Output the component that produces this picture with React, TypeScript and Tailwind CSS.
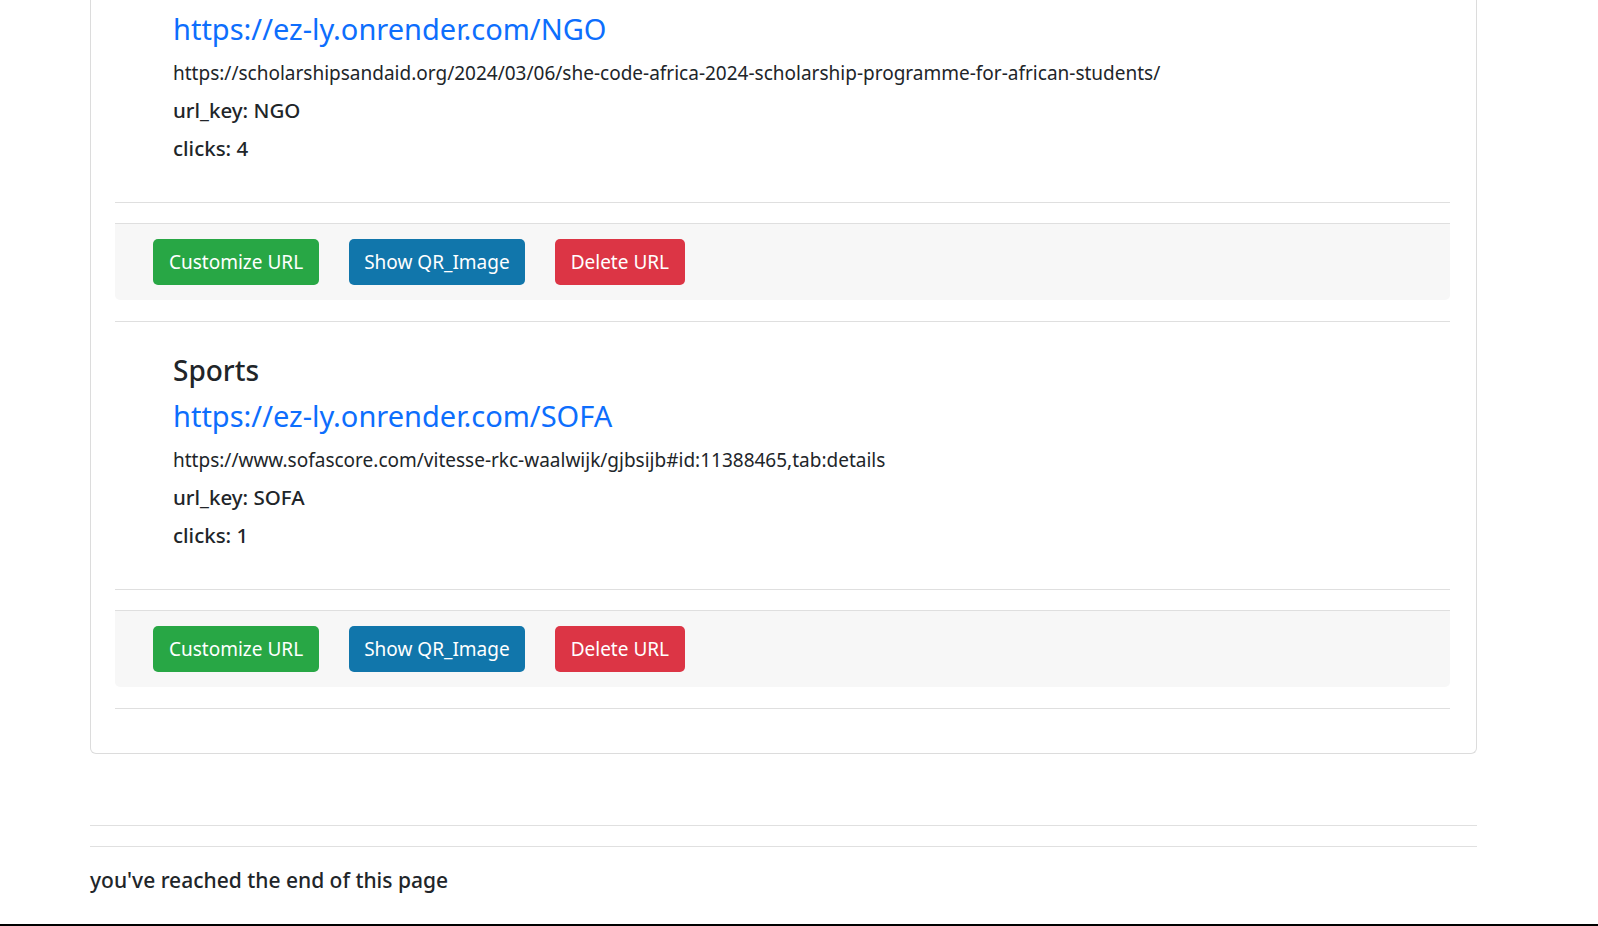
import React from "react";

const font = { fontFamily: '"Noto Sans", "Open Sans", sans-serif' };

type Item = { title?: string; key: string; url: string; clicks: number };

const items: Item[] = [
  {
    key: "NGO",
    url: "https://scholarshipsandaid.org/2024/03/06/she-code-africa-2024-scholarship-programme-for-african-students/",
    clicks: 4,
  },
  {
    title: "Sports",
    key: "SOFA",
    url: "https://www.sofascore.com/vitesse-rkc-waalwijk/gjbsijb#id:11388465,tab:details",
    clicks: 1,
  },
];

function Buttons() {
  return (
    <div className="mt-[20px] border-t border-[#dfdfdf] bg-[#f7f7f7] rounded-b-[5px] pt-[15px] pb-[15px] pl-[38px] flex gap-[30px]">
      <button className="h-[46px] px-[16px] rounded-[5px] bg-[#28a745] text-white text-[19px] leading-none">
        Customize URL
      </button>
      <button className="h-[46px] px-[15px] rounded-[5px] bg-[#1176ab] text-white text-[19px] leading-none">
        Show QR_Image
      </button>
      <button className="h-[46px] px-[16px] rounded-[5px] bg-[#dc3545] text-white text-[19px] leading-none">
        Delete URL
      </button>
    </div>
  );
}

function Entry({ item, first }: { item: Item; first: boolean }) {
  return (
    <div>
      <div className={first ? "pt-[6px] pl-[58px]" : "pt-[25px] pl-[58px]"}>
        {item.title && (
          <div className="h-[46px] flex items-center text-[28px] font-medium text-[#212529]">{item.title}</div>
        )}
        <div className="h-[46px] flex items-center">
          <a className="text-[29px] text-[#0d6efd] font-normal" href="#">
            https://ez-ly.onrender.com/{item.key}
          </a>
        </div>
        <div className="h-[42px] flex items-center text-[19px] text-[#212529]">{item.url}</div>
        <div className="h-[32px] flex items-center text-[20.5px] font-medium text-[#212529]">url_key: {item.key}</div>
        <div className="h-[44px] flex items-center text-[20.5px] font-medium text-[#212529]">clicks: {item.clicks}</div>
      </div>
      <div className="mt-[32px] h-px bg-[#dfdfdf]" />
      <Buttons />
      <div className="mt-[21px] h-px bg-[#dfdfdf]" />
    </div>
  );
}

export default function App() {
  return (
    <div className="w-[1598px] h-[926px] overflow-hidden bg-white flex flex-col" style={font}>
      <div className="ml-[90px] w-[1387px] border-x border-b border-[#dcdcdc] rounded-b-[6px] pl-[24px] pr-[26px] pb-[44px]">
        {items.map((it, i) => (
          <Entry key={it.key} item={it} first={i === 0} />
        ))}
      </div>
      <div className="ml-[90px] w-[1387px] mt-[71px] h-px bg-[#e0e0e0]" />
      <div className="ml-[90px] w-[1387px] mt-[20px] h-px bg-[#e0e0e0]" />
      <div className="ml-[90px] mt-[19px] h-[30px] flex items-center text-[21px] font-medium text-[#212529]">
        you've reached the end of this page
      </div>
      <div className="mt-auto h-[2px] bg-black" />
    </div>
  );
}
